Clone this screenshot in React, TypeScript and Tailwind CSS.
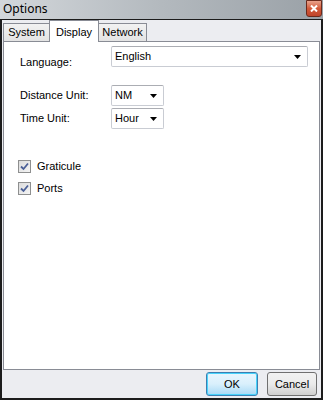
import React from "react";

const font = { fontFamily: '"Liberation Sans", Arial, sans-serif' };

function Arrow() {
  return (
    <svg width="7" height="4" viewBox="0 0 7 4" className="shrink-0">
      <path d="M0 0 H7 L3.5 4 Z" fill="#000" />
    </svg>
  );
}

function Select({ value, w }: { value: string; w: string }) {
  return (
    <div
      className={`${w} h-[21px] flex items-center justify-between pl-[3px] pr-[6px] bg-white border border-[#c9ccd3] border-t-[#abadb3] rounded-[2px] text-[11px] text-black`}
    >
      <span className="leading-none">{value}</span>
      <Arrow />
    </div>
  );
}

function Check({ label }: { label: string }) {
  return (
    <div className="flex items-center gap-[6px] h-[13px]">
      <div className="w-[13px] h-[13px] border border-[#8e8f8f] bg-gradient-to-br from-[#dcdcdc] to-[#f4f4f4] flex items-center justify-center">
        <svg width="9" height="9" viewBox="0 0 9 9">
          <path d="M1 4.5 L3.5 7 L8 1.5" stroke="#4a5f97" strokeWidth="1.8" fill="none" />
        </svg>
      </div>
      <span className="text-[11px] text-black leading-none">{label}</span>
    </div>
  );
}

export default function App() {
  return (
    <div className="w-[323px] h-[400px] flex flex-col overflow-hidden" style={font}>
      <div className="h-[19px] flex items-start justify-between bg-gradient-to-r from-[#d3d7db] via-[#b3b9be] to-[#9aa1a7]">
        <span
          className="pl-[3px] pt-[2px] text-[12px] leading-[14px] text-black"
          style={{ fontFamily: '"Noto Sans", "Open Sans", sans-serif' }}
        >
          Options
        </span>
        <div className="mr-[1px] w-[16px] h-[17px] rounded-b-[3px] border border-[#6b2a1c] bg-gradient-to-b from-[#e8a28c] via-[#d25a3a] to-[#c0442a] flex items-center justify-center">
          <svg width="8" height="7" viewBox="0 0 8 7">
            <path d="M1 0.5 L7 6.5 M7 0.5 L1 6.5" stroke="#fff" strokeWidth="2" />
          </svg>
        </div>
      </div>
      <div className="flex-1 flex flex-col bg-[#ecedf1] border-x-2 border-b-2 border-t border-[#1c1c1c] pl-[1px] pr-[1px]">
        <div className="flex items-end h-[21px] relative z-10">
          <div className="w-[47px] h-[18px] border border-b-0 border-[#898c95] bg-gradient-to-b from-[#f2f2f2] to-[#e3e3e3] text-[11px] flex items-center justify-center">
            System
          </div>
          <div className="w-[50px] h-[22px] -ml-[1px] -mb-[1px] border border-b-0 border-[#898c95] bg-white text-[11px] flex items-start pt-[3px] justify-center">
            Display
          </div>
          <div className="w-[49px] h-[18px] -ml-[1px] border border-b-0 border-[#898c95] bg-gradient-to-b from-[#f2f2f2] to-[#e3e3e3] text-[11px] flex items-center justify-center">
            Network
          </div>
        </div>
        <div className="h-[329px] bg-white border border-[#898c95] flex flex-col pl-[16px] pt-[4px]">
          <div className="flex items-start">
            <span className="w-[91px] pt-[11px] text-[11px] leading-none">Language:</span>
            <Select value="English" w="w-[197px]" />
          </div>
          <div className="flex items-center mt-[17px]">
            <span className="w-[91px] text-[11px] leading-none">Distance Unit:</span>
            <Select value="NM" w="w-[53px]" />
          </div>
          <div className="flex items-center mt-[2px]">
            <span className="w-[91px] text-[11px] leading-none">Time Unit:</span>
            <Select value="Hour" w="w-[53px]" />
          </div>
          <div className="mt-[31px] flex flex-col gap-[9px] -ml-[2px]">
            <Check label="Graticule" />
            <Check label="Ports" />
          </div>
        </div>
        <div className="flex justify-end gap-[9px] pt-[2px] pr-[3px]">
          <div className="w-[52px] h-[24px] rounded-[3px] border border-[#3c7fb1] shadow-[inset_0_0_0_1px_#48d3fb] bg-gradient-to-b from-[#eaf6fd] via-[#d9f0fc] to-[#a7d9f5] flex items-center justify-center text-[11px]">
            OK
          </div>
          <div className="w-[50px] h-[24px] rounded-[3px] border border-[#707070] bg-gradient-to-b from-[#f2f2f2] via-[#ebebeb] to-[#cfcfcf] flex items-center justify-center text-[11px]">
            Cancel
          </div>
        </div>
      </div>
    </div>
  );
}
